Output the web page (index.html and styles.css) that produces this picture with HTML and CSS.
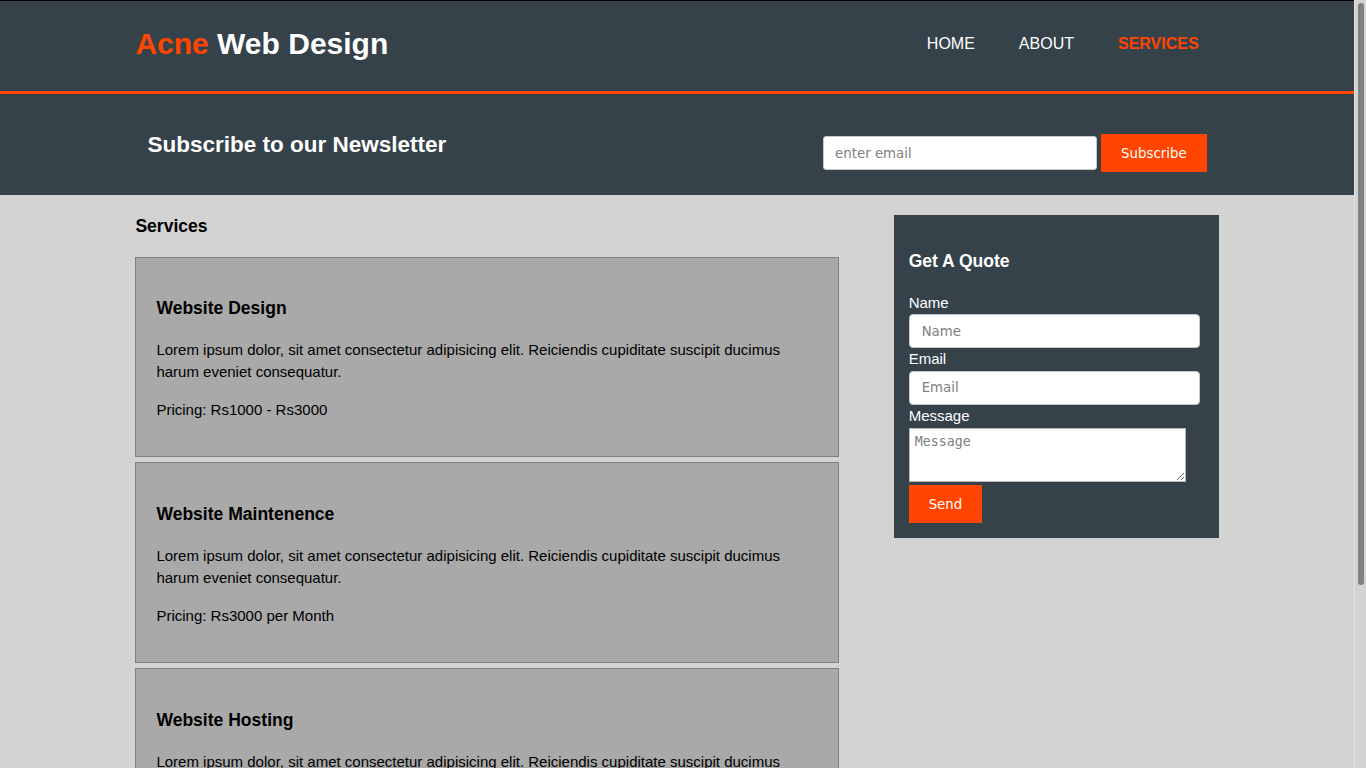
FILE: index.html
```html
<!DOCTYPE html>
<html lang="en">
<head>
<meta charset="utf-8">
<title>Acne Web Design | Services</title>
<link rel="stylesheet" href="styles.css">
</head>
<body>
<div class="page">
<header class="site-header">
  <div class="container header-inner">
    <h1 class="branding"><span class="highlight">Acne</span> Web Design</h1>
    <nav class="nav">
      <a href="#" class="nav-link">Home</a>
      <a href="#" class="nav-link">About</a>
      <a href="#" class="nav-link current">Services</a>
    </nav>
  </div>
</header>

<section class="newsletter">
  <div class="container newsletter-inner">
    <h2 class="newsletter-title">Subscribe to our Newsletter</h2>
    <form class="newsletter-form">
      <input type="email" class="email-input" placeholder="enter email">
      <button type="button" class="button-1">Subscribe</button>
    </form>
  </div>
</section>

<section class="main-area">
  <div class="container main-inner">
    <article class="main-col">
      <h3 class="page-title">Services</h3>
      <div class="service">
        <h3 class="service-title">Website Design</h3>
        <p>Lorem ipsum dolor, sit amet consectetur adipisicing elit. Reiciendis cupiditate suscipit ducimus harum eveniet consequatur.</p>
        <p>Pricing: Rs1000 - Rs3000</p>
      </div>
      <div class="service">
        <h3 class="service-title">Website Maintenence</h3>
        <p>Lorem ipsum dolor, sit amet consectetur adipisicing elit. Reiciendis cupiditate suscipit ducimus harum eveniet consequatur.</p>
        <p>Pricing: Rs3000 per Month</p>
      </div>
      <div class="service">
        <h3 class="service-title">Website Hosting</h3>
        <p>Lorem ipsum dolor, sit amet consectetur adipisicing elit. Reiciendis cupiditate suscipit ducimus harum eveniet consequatur.</p>
        <p>Pricing: Rs500 per Month</p>
      </div>
    </article>

    <aside class="sidebar">
      <h3 class="quote-title">Get A Quote</h3>
      <form class="quote">
        <label class="quote-label">Name</label>
        <input type="text" class="quote-input" placeholder="Name">
        <label class="quote-label">Email</label>
        <input type="email" class="quote-input" placeholder="Email">
        <label class="quote-label">Message</label>
        <textarea class="quote-textarea" placeholder="Message"></textarea>
        <button type="button" class="button-1 send">Send</button>
      </form>
    </aside>
  </div>
</section>
</div>
<div class="scrollbar" aria-hidden="true"><div class="scrollbar-thumb"></div></div>
</body>
</html>
```

FILE: styles.css
```css
html, body {
  margin: 0;
  padding: 0;
}

body {
  font: 15px/1.5 "Liberation Sans", Arial, Helvetica, sans-serif;
  background: #d3d3d3;
  color: #000;
}

.page {
  margin-right: 12px;
}

.container {
  width: 80%;
  margin: 0 auto;
}

/* Fake page scrollbar */
.scrollbar {
  position: fixed;
  top: 0;
  right: 0;
  width: 11px;
  height: 100vh;
  background: #d4d3d1;
  border-left: 1px solid #e2e1df;
}

.scrollbar-thumb {
  position: absolute;
  top: 3px;
  left: 3px;
  width: 6px;
  height: 582px;
  border-radius: 4px;
  background: #7d8181;
}

/* Header */
.site-header {
  background: #35424a;
  color: #fff;
  border-top: 1px solid #000;
  border-bottom: 3px solid #ff4500;
  padding-bottom: 5px;
}

.header-inner {
  height: 85px;
  display: flex;
  align-items: center;
  justify-content: space-between;
}

.branding {
  margin: 0;
  font-size: 30px;
  font-weight: bold;
  line-height: 1.5;
}

.highlight {
  color: #ff4500;
}

.nav {
  display: flex;
  gap: 4px;
}

.nav-link {
  color: #fff;
  text-decoration: none;
  text-transform: uppercase;
  font-size: 16px;
  padding: 0 20px;
}

.nav-link.current {
  color: #ff4500;
  font-weight: bold;
}

/* Newsletter */
.newsletter {
  background: #35424a;
  color: #fff;
  padding: 15px 0;
}

.newsletter-inner {
  display: flex;
  justify-content: space-between;
  align-items: flex-start;
  padding: 0 12px;
  box-sizing: border-box;
}

.newsletter-title {
  margin: 19px 0 18.4px;
  font-size: 22.5px;
  font-weight: bold;
  line-height: 1.5;
}

.newsletter-form {
  display: flex;
  align-items: center;
  gap: 4px;
  margin-top: 25px;
}

.email-input {
  box-sizing: border-box;
  width: 274px;
  height: 34px;
  padding: 0 11px;
  border: 1px solid #c8c8c8;
  border-radius: 3px;
  background: #fff;
  font: 13.333px "DejaVu Sans", sans-serif;
  color: #333;
}

.email-input::placeholder,
.quote-input::placeholder {
  color: #808080;
}

.button-1 {
  height: 38px;
  background: #ff4500;
  border: 0;
  padding: 0 20px;
  color: #fff;
  font: 13.333px "DejaVu Sans", sans-serif;
  cursor: pointer;
}

/* Main */
.main-inner {
  display: flex;
  justify-content: space-between;
  align-items: flex-start;
}

.main-col {
  width: 65%;
}

.page-title {
  font-size: 17.55px;
  margin: 17.55px 0;
}

.service {
  background: #a9a9a9;
  border: 1px solid #808080;
  padding: 20px;
  margin-bottom: 5px;
}

.service-title {
  font-size: 17.55px;
  margin: 17.55px 0;
}

.service p {
  margin: 15px 0;
}

/* Sidebar */
.sidebar {
  width: 30%;
  box-sizing: border-box;
  margin-top: 20px;
  padding: 15px;
  background: #35424a;
  color: #fff;
}

.quote-title {
  font-size: 17.55px;
  margin: 17.55px 0;
}

.quote {
  display: flex;
  flex-direction: column;
  align-items: flex-start;
}

.quote-label {
  display: block;
}

.quote-input {
  box-sizing: border-box;
  width: 291px;
  height: 34px;
  padding: 0 12px;
  border: 1px solid #c8c8c8;
  border-radius: 4px;
  background: #fff;
  font: 13.333px "DejaVu Sans", sans-serif;
}

.quote-textarea {
  box-sizing: border-box;
  width: 277px;
  height: 54px;
  padding: 5px;
  border: 1px solid #b8b8b8;
  background: #fff;
  font: 13.333px "DejaVu Sans Mono", monospace;
  margin: 1px 0 0;
}

.quote-textarea::placeholder {
  color: #808080;
}

.send {
  margin-top: 3px;
}
```
